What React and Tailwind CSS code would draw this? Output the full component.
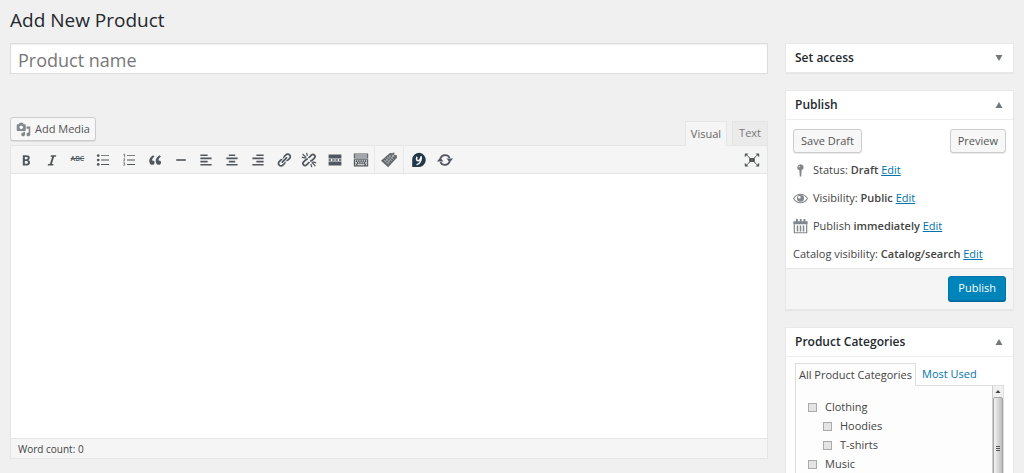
import { useState } from "react";

const icons = {
  bold: (
    <path d="M6 4v13h4.54c1.37 0 2.46-.33 3.26-1 .8-.66 1.2-1.58 1.2-2.77 0-.84-.17-1.51-.51-2.01s-.9-.85-1.67-1.03v-.09c.57-.1 1.02-.4 1.36-.9s.51-1.13.51-1.91c0-1.14-.39-1.98-1.17-2.5C12.75 4.26 11.5 4 9.78 4H6zm2.57 5.15V6.26h1.36c.73 0 1.27.11 1.61.32.34.22.51.58.51 1.07 0 .54-.16.92-.47 1.15s-.82.35-1.51.35h-1.5zm0 2.19h1.6c1.44 0 2.16.53 2.16 1.61 0 .6-.17 1.05-.51 1.34s-.86.43-1.57.43H8.57v-3.38z" />
  ),
  italic: <path d="M14.78 6h-2.13l-2.8 9h2.12l-.62 2H4.6l.62-2h2.14l2.8-9H8.03l.62-2h6.75z" />,
  bullets: (
    <>
      <circle cx="4" cy="4.5" r="1.7" />
      <circle cx="4" cy="10" r="1.7" />
      <circle cx="4" cy="15.5" r="1.7" />
      <path d="M7.500 4h10v1.100h-10zM7.500 9.500h10v1.100h-10zM7.500 15h10v1.100h-10z" />
    </>
  ),
  numbers: (
    <>
      <path d="M7.500 4h10v1.100h-10zM7.500 9.500h10v1.100h-10zM7.500 15h10v1.100h-10z" />
      <path
        d="M3 3.400L4.500 2.600v4M3 8.700c.5-.7 1.800-.5 1.800.3 0 .7-.9 1.200-1.700 2.100h2M3 13.600h1.700l-1 1.300c1.600 0 1.600 2.300-.8 1.800"
        fill="none"
        stroke="currentColor"
        strokeWidth="0.900"
      />
    </>
  ),
  quote: (
    <path d="M9.49 13.22c0-.74-.2-1.38-.61-1.9-.62-.78-1.83-.88-2.53-.72-.29-1.65 1.11-3.75 2.92-4.65L7.88 4c-2.73 1.3-5.42 4.28-4.96 8.05C3.21 14.43 4.59 16 6.54 16c.85 0 1.56-.25 2.12-.75s.83-1.18.83-2.03zm8.05 0c0-.74-.2-1.38-.61-1.9-.63-.78-1.83-.88-2.53-.72-.29-1.65 1.11-3.75 2.92-4.65L15.93 4c-2.73 1.3-5.41 4.28-4.95 8.05.29 2.38 1.66 3.95 3.61 3.95.85 0 1.56-.25 2.12-.75s.83-1.18.83-2.03z" />
  ),
  rule: <path d="M4 9h12v2H4z" />,
  alignLeft: <path d="M12 5V3H3v2h9zm5 4V7H3v2h14zm-5 4v-2H3v2h9zm5 4v-2H3v2h14z" />,
  alignCenter: <path d="M14 5V3H6v2h8zm3 4V7H3v2h14zm-3 4v-2H6v2h8zm3 4v-2H3v2h14z" />,
  alignRight: <path d="M17 5V3H8v2h9zm0 4V7H3v2h14zm0 4v-2H8v2h9zm0 4v-2H3v2h14z" />,
  link: (
    <path d="M17.74 2.76c1.68 1.69 1.68 4.41 0 6.1l-1.53 1.52c-1.12 1.12-2.7 1.47-4.14 1.09l2.62-2.61.76-.77.76-.76c.84-.84.84-2.2 0-3.04-.84-.85-2.2-.85-3.04 0l-.77.76-3.38 3.38c-.37-1.44-.02-3.02 1.1-4.14l1.52-1.53c1.69-1.68 4.42-1.68 6.1 0zM8.59 13.43l5.34-5.34c.42-.42.42-1.1 0-1.52-.44-.43-1.13-.39-1.53 0l-5.33 5.34c-.42.42-.42 1.1 0 1.52.44.43 1.13.39 1.52 0zm-.76 2.29l4.14-4.15c.38 1.44.03 3.02-1.09 4.14l-1.52 1.53c-1.69 1.68-4.41 1.68-6.1 0-1.68-1.68-1.68-4.42 0-6.1l1.53-1.52c1.12-1.12 2.7-1.47 4.14-1.1l-4.14 4.15c-.85.84-.85 2.2 0 3.05.84.84 2.2.84 3.04 0z" />
  ),
  unlink: (
    <g fill="none" stroke="currentColor">
      <path
        d="M9.500 7.500l3.500-3.500c2.600-2.600 6.200 1 3.700 3.600l-2.600 2.600c-.8.8-1.800 1-2.700.8M10.500 12.500l-3.500 3.500c-2.600 2.600-6.200-1-3.700-3.600l2.600-2.600c.8-.8 1.800-1 2.700-.8"
        strokeWidth="2.200"
      />
      <path d="M2 2.500l4.500 4.500M7 1L8 5M1 6.500l4.500 1.200M18 17.500l-4.500-4.500M13.500 19l-1.200-4M19 13.500l-4.500-1.200" strokeWidth="1.500" />
    </g>
  ),
  more: <path d="M2 3h16v5H2zM2 9.200h3v1.600H2zM6.500 9.200h3v1.600h-3zM10.500 9.200h3v1.600h-3zM15 9.200h3v1.600h-3zM2 12h16v5H2z" />,
  keyboard: (
    <path
      fillRule="evenodd"
      d="M1 2h18v6H1zM2.200 3.200v1.300h15.600V3.200zM2.200 5.600v1.200h15.600V5.600zM1 9h18v9H1zM2.500 10.300v1.500H4v-1.500zM5.200 10.300v1.500h1.500v-1.500zM8 10.300v1.500h1.500v-1.500zM10.800 10.300v1.500h1.500v-1.500zM13.500 10.300v1.500H15v-1.500zM16.200 10.300v1.500h1.500v-1.500zM2.500 12.900v1.500H5v-1.500zM6.500 12.900v1.500H8v-1.500zM9.300 12.900v1.500h1.500v-1.500zM12 12.900v1.500h1.500v-1.500zM15 12.900v1.500h2.700v-1.500zM2.500 15.400v1.300H4v-1.300zM5.500 15.400v1.300h8.800v-1.300zM16 15.400v1.300h1.700v-1.300z"
    />
  ),
  shortcode: (
    <>
      <path d="M11.500 1l8 6.500L9 19l-9-8z" fill="#5f6569" />
      <path
        d="M3.500 10l6.500 5.500M5.500 8l6.500 5.500M7.500 6l6.500 5.500M9.500 4l6.500 5.500M5 12.500l7.500-8.500M7.500 14.500l7-8"
        stroke="#b5b8ba"
        strokeWidth="1"
      />
      <path d="M12 1.500l5-1-.5 3 3.500.5v4.500z" fill="#6c7276" />
      <circle cx="15" cy="5" r="1" fill="#f5f5f5" />
    </>
  ),
  pin: (
    <>
      <path fill="#22384a" d="M10.500 1a8.800 8.800 0 1 1-2 17.800H1.500V9.500a9 8.500 0 0 1 9-8.500z" />
      <path
        d="M7.500 6c-.8 2-1 5 1.200 5 2 0 3.300-2.500 4-5.500.6 4-1.200 9.500-5.700 10.500"
        fill="none"
        stroke="#f5f5f5"
        strokeWidth="2"
      />
    </>
  ),
  refresh: (
    <>
      <path d="M4.300 8a6.200 6.200 0 0 1 11.400-.6M15.700 12a6.200 6.200 0 0 1-11.400.6" fill="none" stroke="currentColor" strokeWidth="2.200" />
      <path d="M0 12L4 7l4 5zM20 8l-4 5L12 8z" />
    </>
  ),
  fullscreen: (
    <>
      <path d="M6.500 7.500h7v5h-7z" />
      <path d="M3 3.500l14 13M17 3.500l-14 13" stroke="currentColor" strokeWidth="1.200" />
      <path d="M1 2h4.500L1 6.500zM19 2v4.500L14.500 2zM1 18v-4.500L5.500 18zM19 18h-4.500l4.500-4.500z" />
    </>
  ),
  media: (
    <path d="M13 11V4c0-.55-.45-1-1-1h-1.670L9 1H5L3.670 3H2c-.55 0-1 .45-1 1v7c0 .55.45 1 1 1h10c.55 0 1-.45 1-1zM7 4.500c1.380 0 2.500 1.120 2.500 2.500S8.380 9.500 7 9.500 4.500 8.380 4.500 7 5.620 4.500 7 4.500zM14 6h5v10.500c0 1.380-1.120 2.500-2.500 2.500S14 17.880 14 16.500s1.120-2.500 2.500-2.500c.17 0 .34.02.5.05V9h-3V6zm-4 8.050V13h2v3.500c0 1.380-1.120 2.500-2.500 2.500S7 17.880 7 16.500 8.120 14 9.500 14c.17 0 .34.02.5.05z" />
  ),
  status: (
    <path
      fillRule="evenodd"
      d="M10 1.500a4.300 4.300 0 0 1 1.500 8.300L11 18H9l-.5-8.200A4.300 4.300 0 0 1 10 1.500zM8.500 3.500a2.300 2.300 0 0 0-.9 2.500l1-.3c-.2-.6 0-1.100.6-1.500z"
    />
  ),
  eye: (
    <>
      <path
        d="M.8 10C3 6.300 6.200 4.300 10 4.300s7 2 9.200 5.700c-2.200 3.700-5.400 5.700-9.200 5.700S3 13.700.8 10z"
        fill="none"
        stroke="currentColor"
        strokeWidth="1.400"
      />
      <path fillRule="evenodd" d="M10 5a4.700 4.700 0 1 1 0 9.400A4.700 4.700 0 0 1 10 5zM8.500 6.500a1.800 1.800 0 1 0 0 3.600 1.800 1.800 0 0 0 0-3.600z" />
    </>
  ),
  calendar: (
    <>
      <path d="M4 0h2.500v3H9V0h2.500v3H14V0h2.500v3H19.500v4H.5V3H4z" />
      <path d="M1 7h1.600v12H1zM17.400 7H19v12h-1.600zM1 17.600h18V19H1zM5 8.500h2v8H5zM9 8.500h2v8H9zM13 8.500h2v8h-2z" />
    </>
  ),
};

const Icon = ({ name, className = "size-4" }) => (
  <svg viewBox="0 0 20 20" fill="currentColor" aria-hidden="true" className={`shrink-0 ${className}`}>
    {icons[name]}
  </svg>
);

const formatButtons = [
  { icon: "bold", label: "Bold" },
  { icon: "italic", label: "Italic" },
  { icon: "strike", label: "Strikethrough" },
  { icon: "bullets", label: "Bulleted list" },
  { icon: "numbers", label: "Numbered list" },
  { icon: "quote", label: "Blockquote" },
  { icon: "rule", label: "Horizontal line" },
  { icon: "alignLeft", label: "Align left" },
  { icon: "alignCenter", label: "Align center" },
  { icon: "alignRight", label: "Align right" },
  { icon: "link", label: "Insert/edit link" },
  { icon: "unlink", label: "Remove link" },
  { icon: "more", label: "Insert Read More tag" },
  { icon: "keyboard", label: "Toolbar Toggle" },
];

const categories = [
  { id: "clothing", name: "Clothing" },
  { id: "hoodies", name: "Hoodies", child: true },
  { id: "t-shirts", name: "T-shirts", child: true },
  { id: "music", name: "Music" },
];

function ToolButton({ icon, label, className = "" }) {
  return (
    <button type="button" aria-label={label} className={`flex h-6 items-center justify-center ${className}`}>
      {icon === "strike" ? (
        <span className="text-[7px] font-semibold line-through">ABC</span>
      ) : (
        <Icon name={icon} />
      )}
    </button>
  );
}

function Button({ children, className = "px-[7px]" }) {
  return (
    <button
      type="button"
      className={`flex h-6 items-center rounded-[3px] border border-[#ccc] bg-[#f7f7f7] text-[#555] shadow-[0_1px_0_rgba(0,0,0,0.08)] ${className}`}
    >
      {children}
    </button>
  );
}

function MetaBox({ title, defaultOpen = true, children }) {
  const [open, setOpen] = useState(defaultOpen);

  return (
    <section className="border border-[#e8e8e8] bg-white shadow-[0_1px_1px_rgba(0,0,0,0.04)]">
      <button
        type="button"
        aria-expanded={open}
        onClick={() => setOpen(!open)}
        className="flex h-7 w-full items-center justify-between pr-2.5 pl-[9px] text-[#23282d]"
      >
        <h2 className="text-xs font-semibold">{title}</h2>
        <svg viewBox="0 0 8 8" className="size-2 fill-[#72777c]" aria-hidden="true">
          <path d={open ? "M4 1l3.500 6h-7z" : "M.5 1h7L4 7z"} />
        </svg>
      </button>
      {open && children}
    </section>
  );
}

function PublishRow({ icon, label, value }) {
  return (
    <div className="flex h-7 items-center">
      {icon && <Icon name={icon} className="mr-[5px] size-[15px] text-[#82878c]" />}
      <p>
        {label} <b className="font-semibold">{value}</b>{" "}
        <a href="#edit" className="text-[#0073aa] underline">
          Edit
        </a>
      </p>
    </div>
  );
}

function Editor() {
  return (
    <div>
      <div className="flex items-end justify-between">
        <Button className="mb-1 gap-1 px-[5px]">
          <Icon name="media" className="size-[15px] text-[#82878c]" />
          Add Media
        </Button>
        <div className="flex gap-[5px] text-[#666]">
          <button type="button" className="-mb-px h-[25px] border border-b-0 border-[#e5e5e5] bg-[#f5f5f5] px-[5px]">
            Visual
          </button>
          <button type="button" className="h-6 border border-b-0 border-[#e5e5e5] bg-[#ebebeb] px-1.5 text-[#777]">
            Text
          </button>
        </div>
      </div>
      <div className="border border-[#e5e5e5] bg-white">
        <div className="flex h-7 items-center border-b border-[#e5e5e5] bg-[#f5f5f5] pl-0.5 text-[#50575e]">
          <div className="flex w-[361px]">
            {formatButtons.map((b) => (
              <ToolButton key={b.icon} icon={b.icon} label={b.label} className="flex-1" />
            ))}
          </div>
          <div className="flex h-full items-center border-x border-[#e8e8e8] px-px">
            <ToolButton icon="shortcode" label="Insert shortcode" className="w-[26px]" />
          </div>
          <div className="ml-0.5 flex">
            <ToolButton icon="pin" label="Insert snippet" className="w-[26px]" />
            <ToolButton icon="refresh" label="Refresh" className="w-[26px]" />
          </div>
          <ToolButton icon="fullscreen" label="Fullscreen" className="mr-0.5 ml-auto w-[26px]" />
        </div>
        <textarea aria-label="Product description" className="block h-[264px] w-full resize-none px-2 py-1.5 outline-none" />
        <div className="h-5 border-t border-[#e5e5e5] bg-[#f5f5f5] px-[7px] text-[10px] leading-5">Word count: 0</div>
      </div>
    </div>
  );
}

function Categories() {
  return (
    <div className="border-t border-[#eee] px-[9px] pt-1.5">
      <div className="flex">
        <button type="button" className="z-10 -mb-px h-[23px] border border-b-0 border-[#ddd] bg-[#fdfdfd] px-[3px] text-[#444]">
          All Product Categories
        </button>
        <button type="button" className="h-[22px] px-1.5 text-[#0073aa]">
          Most Used
        </button>
      </div>
      <div className="flex h-[132px] overflow-hidden border border-[#ddd] bg-[#fdfdfd]">
        <ul className="flex-1 pt-3 pl-3">
          {categories.map((c) => (
            <li key={c.id} className={c.child ? "pl-[15px]" : ""}>
              <label className="flex h-[19px] items-center gap-2">
                <input
                  type="checkbox"
                  className="size-[9px] appearance-none border border-[#aaa] bg-[#e4e4e4] checked:bg-[#1e8cbe]"
                />
                {c.name}
              </label>
            </li>
          ))}
        </ul>
        <div className="flex w-[11px] flex-col border-l border-[#ccc] bg-[#f0f0f0]" aria-hidden="true">
          <svg viewBox="0 0 10 11" className="h-[11px] w-full fill-[#444]">
            <path d="M5 4l2.500 3h-5z" />
          </svg>
          <div className="flex h-[104px] items-center justify-center rounded-xs border border-[#a5a5a5] bg-linear-to-r from-[#f4f4f4] to-[#bdbdbf]">
            <svg viewBox="0 0 4 6" className="h-1.5 w-1 fill-[#555]">
              <path d="M0 0h4v1H0zM0 2h4v1H0zM0 4h4v1H0z" />
            </svg>
          </div>
        </div>
      </div>
    </div>
  );
}

export default function App() {
  return (
    <div className="h-screen overflow-hidden bg-[#f0f0f0] px-2.5 pt-2 font-['Open_Sans',sans-serif] text-[11px] text-[#444]">
      <h1 className="text-[19px] leading-6 text-[#23282d]">Add New Product</h1>
      <div className="mt-[11px] flex items-start gap-[17px]">
        <main className="min-w-0 flex-1">
          <input
            type="text"
            aria-label="Product name"
            placeholder="Product name"
            className="mb-[43px] block h-[31px] w-full border border-[#ddd] bg-white px-[7px] pt-0.5 text-lg text-[#32373c] shadow-[inset_0_1px_2px_rgba(0,0,0,0.07)] outline-none placeholder:text-[#777]"
          />
          <Editor />
        </main>
        <aside className="flex w-[229px] shrink-0 flex-col gap-[17px]">
          <MetaBox title="Set access" defaultOpen={false} />
          <MetaBox title="Publish">
            <div className="border-t border-[#eee] px-[7px] pt-[9px]">
              <div className="mb-[3px] flex justify-between">
                <Button>Save Draft</Button>
                <Button>Preview</Button>
              </div>
              <PublishRow icon="status" label="Status:" value="Draft" />
              <PublishRow icon="eye" label="Visibility:" value="Public" />
              <PublishRow icon="calendar" label="Publish" value="immediately" />
              <PublishRow label="Catalog visibility:" value="Catalog/search" />
            </div>
            <div className="flex justify-end border-t border-[#e5e5e5] bg-[#f5f5f5] px-[7px] pt-[7px] pb-2">
              <button
                type="button"
                className="h-[25px] rounded-[3px] border border-[#0073aa] bg-[#0085ba] px-[9px] text-white shadow-[0_1px_0_#006799]"
              >
                Publish
              </button>
            </div>
          </MetaBox>
          <MetaBox title="Product Categories">
            <Categories />
          </MetaBox>
        </aside>
      </div>
    </div>
  );
}
